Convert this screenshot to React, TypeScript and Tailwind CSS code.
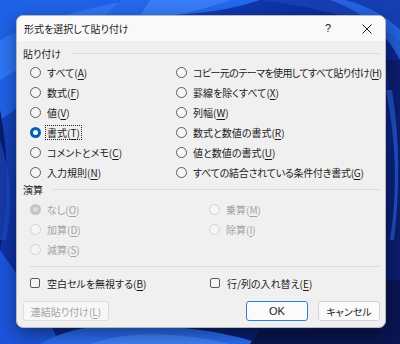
import React from "react";

type LabelProps = { pre: string; k: string; post?: string };

function AccLabel({ pre, k, post = ")" }: LabelProps) {
  return (
    <span className="whitespace-nowrap">
      {pre}
      <span className="underline underline-offset-[1.5px] decoration-[1px]">{k}</span>
      {post}
    </span>
  );
}

function Radio({ checked, disabled }: { checked?: boolean; disabled?: boolean }) {
  if (checked && !disabled)
    return (
      <span className="flex h-[11px] w-[11px] shrink-0 items-center justify-center rounded-full bg-[#005fb8]">
        <span className="h-[5px] w-[5px] rounded-full bg-white" />
      </span>
    );
  if (checked && disabled)
    return (
      <span className="flex h-[11px] w-[11px] shrink-0 items-center justify-center rounded-full bg-[#c4c4c4]">
        <span className="h-[5px] w-[5px] rounded-full bg-[#dedede]" />
      </span>
    );
  if (disabled)
    return <span className="h-[11px] w-[11px] shrink-0 rounded-full border border-[#d2d2d2] bg-[#f5f5f5]" />;
  return <span className="h-[11px] w-[11px] shrink-0 rounded-full border border-[#5d5d5d] bg-[#f6f6f6]" />;
}

function RadioRow({
  pre,
  k,
  checked,
  disabled,
  focus,
  tight,
}: {
  pre: string;
  k: string;
  checked?: boolean;
  disabled?: boolean;
  focus?: boolean;
  tight?: string;
}) {
  return (
    <div className={`flex h-[20px] items-center gap-[6px] ${disabled ? "text-[#a3a3a3]" : "text-[#1b1b1b]"}`}>
      <Radio checked={checked} disabled={disabled} />
      <span className={`${focus ? "-ml-[2px] border border-dotted border-[#222] px-[1px] leading-[13px]" : ""} ${tight ?? ""}`}>
        <AccLabel pre={pre} k={k} />
      </span>
    </div>
  );
}

function CheckRow({ pre, k }: { pre: string; k: string }) {
  return (
    <div className="flex h-[20px] items-center gap-[7px] text-[#1b1b1b]">
      <span className="h-[10px] w-[10px] shrink-0 rounded-[2px] border border-[#5a5a5a] bg-[#f6f6f6]" />
      <AccLabel pre={pre} k={k} />
    </div>
  );
}

function GroupLabel({ text }: { text: string }) {
  return (
    <div className="flex h-[14px] items-center gap-[10px] pl-[6px] pr-[5px] text-[#1b1b1b]">
      <span className="whitespace-nowrap">{text}</span>
      <div className="h-px flex-1 bg-[#dcdcdc]" />
    </div>
  );
}

function Wallpaper() {
  return (
    <svg className="absolute inset-0" width="400" height="344" viewBox="0 0 400 344">
      <defs>
        <linearGradient id="bg" x1="0" y1="0" x2="1" y2="1">
          <stop offset="0" stopColor="#1a55d6" />
          <stop offset="0.45" stopColor="#0c2a9a" />
          <stop offset="1" stopColor="#081a5e" />
        </linearGradient>
      </defs>
      <rect width="400" height="344" fill="url(#bg)" />
      <path d="M0 0 H120 C90 30 60 80 0 120 Z" fill="#1f62e8" />
      <path d="M0 40 C40 20 80 10 130 0 L150 0 C100 20 50 50 0 80 Z" fill="#3a86ff" opacity="0.55" />
      <path d="M120 0 H260 C230 10 200 14 160 16 L110 16 Z" fill="#2468ee" />
      <path d="M150 0 H230 C210 8 190 12 170 16 L140 16 Z" fill="#4a92ff" opacity="0.5" />
      <path d="M260 0 H400 V40 C370 20 320 8 260 0 Z" fill="#163fb4" />
      <path d="M330 0 C360 10 385 30 400 60 V30 C385 15 365 5 345 0 Z" fill="#2c74f4" opacity="0.7" />
      <path d="M0 110 C8 150 10 200 0 250 Z" fill="#0a1b6a" />
      <path d="M0 140 C10 170 14 200 6 240 L0 240 Z" fill="#1d4fd0" opacity="0.6" />
      <path d="M0 250 C20 280 40 300 60 344 H0 Z" fill="#1c55dc" />
      <path d="M40 344 C80 320 140 322 200 330 C230 334 250 340 260 344 Z" fill="#2a6df2" />
      <path d="M90 344 C130 330 180 332 230 344 Z" fill="#4b93ff" opacity="0.6" />
      <path d="M260 330 H400 V344 H250 Z" fill="#0a1650" />
      <path d="M386 60 C395 120 398 200 386 280 L400 280 V60 Z" fill="#0b1d6e" />
      <path d="M386 90 C396 140 398 190 390 240 L394 240 C400 190 400 140 392 90 Z" fill="#2b6cf0" opacity="0.6" />
      <path d="M386 280 H400 V344 H386 Z" fill="#0a1552" />
    </svg>
  );
}

export default function App() {
  return (
    <div className="relative h-[344px] w-[400px] overflow-hidden bg-[#0c2a9a] font-['Noto_Sans_CJK_JP','Noto_Sans',sans-serif] text-[10px] [font-feature-settings:'palt']">
      <Wallpaper />
      <div className="relative pl-[16px] pt-[15px]">
        <div className="flex h-[313px] w-[370px] flex-col overflow-hidden rounded-[7px] border border-[#b9b9b9] bg-[#f0f0f0] shadow-[0_6px_18px_rgba(0,0,0,0.45)]">
          {/* Title bar */}
          <div className="flex h-[25px] shrink-0 items-center justify-between bg-[#f9f9f9] pl-[7px] pr-[8px]">
            <span className="text-[#1b1b1b]">形式を選択して貼り付け</span>
            <div className="flex items-center gap-[19px]">
              <span className="flex w-[20px] justify-center font-['Liberation_Sans',sans-serif] text-[11px] text-[#1b1b1b]">?</span>
              <span className="flex w-[20px] justify-center">
                <svg width="10" height="10" viewBox="0 0 10 10">
                  <path d="M0.5 0.5 L9.5 9.5 M9.5 0.5 L0.5 9.5" stroke="#1b1b1b" strokeWidth="1" />
                </svg>
              </span>
            </div>
          </div>

          {/* Body */}
          <div className="flex flex-1 flex-col pt-[5px]">
            <GroupLabel text="貼り付け" />
            <div className="mt-[2px] grid grid-cols-[146px_1fr] pl-[13px]">
              <div className="flex flex-col">
                <RadioRow pre="すべて(" k="A" />
                <RadioRow pre="数式(" k="F" />
                <RadioRow pre="値(" k="V" />
                <RadioRow pre="書式(" k="T" checked focus />
                <RadioRow pre="コメントとメモ(" k="C" />
                <RadioRow pre="入力規則(" k="N" />
              </div>
              <div className="flex flex-col">
                <RadioRow pre="コピー元のテーマを使用してすべて貼り付け(" k="H" tight="tracking-[-0.6px]" />
                <RadioRow pre="罫線を除くすべて(" k="X" />
                <RadioRow pre="列幅(" k="W" />
                <RadioRow pre="数式と数値の書式(" k="R" />
                <RadioRow pre="値と数値の書式(" k="U" />
                <RadioRow pre="すべての結合されている条件付き書式(" k="G" tight="tracking-[-0.25px]" />
              </div>
            </div>

            <GroupLabel text="演算" />
            <div className="mt-[3px] grid grid-cols-[179px_1fr] pl-[13px]">
              <div className="flex flex-col">
                <RadioRow pre="なし(" k="O" checked disabled />
                <RadioRow pre="加算(" k="D" disabled />
                <RadioRow pre="減算(" k="S" disabled />
              </div>
              <div className="flex flex-col">
                <RadioRow pre="乗算(" k="M" disabled />
                <RadioRow pre="除算(" k="I" disabled />
              </div>
            </div>

            <div className="ml-[13px] mr-[5px] mt-[7px] h-px bg-[#dcdcdc]" />

            <div className="mt-[6px] grid grid-cols-[180px_1fr] pl-[13px]">
              <CheckRow pre="空白セルを無視する(" k="B" />
              <CheckRow pre="行/列の入れ替え(" k="E" />
            </div>

            <div className="mt-[8px] flex items-center pl-[6px] pr-[5px]">
              <div className="flex h-[20px] w-[86px] items-center justify-center rounded-[3px] border border-[#dedede] bg-[#f7f7f7] text-[#a3a3a3]">
                <AccLabel pre="連結貼り付け(" k="L" />
              </div>
              <div className="flex-1" />
              <div className="flex h-[20px] w-[62px] items-center justify-center rounded-[3px] border border-[#2f7fd0] bg-[#fbfbfb] text-[#1b1b1b] font-['Liberation_Sans',sans-serif] text-[11px]">
                OK
              </div>
              <div className="ml-[10px] flex h-[20px] w-[62px] items-center justify-center rounded-[3px] border border-[#d3d3d3] bg-[#fbfbfb] text-[#1b1b1b]">
                キャンセル
              </div>
            </div>
          </div>
        </div>
      </div>
    </div>
  );
}
